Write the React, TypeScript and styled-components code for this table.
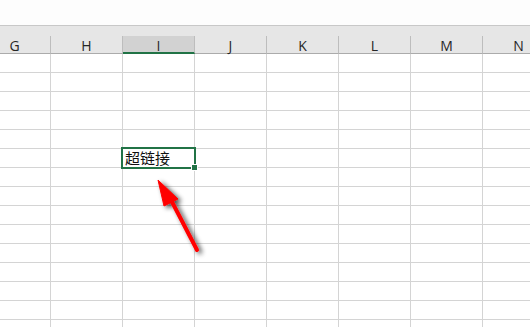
import React from 'react';
import styled, { createGlobalStyle } from 'styled-components';

const GlobalStyle = createGlobalStyle`
  html, body {
    margin: 0;
    padding: 0;
    background: #ffffff;
    overflow: hidden;
  }
`;

const COLUMNS = ['G', 'H', 'I', 'J', 'K', 'L', 'M', 'N'];
const ROW_COUNT = 15;
const ACTIVE_COL = 'I';
const ACTIVE_ROW = 5;

const Sheet = styled.div`
  position: relative;
  width: 530px;
  height: 327px;
  overflow: hidden;
  background: #ffffff;
  font-family: 'Open Sans', 'Liberation Sans', sans-serif;
`;

const FormulaGap = styled.div`
  height: 25px;
  background: #fdfdfd;
  border-bottom: 1px solid #c8c8c8;
`;

const HeaderBar = styled.div`
  display: flex;
  align-items: flex-end;
  height: 28px;
  margin-left: -21px;
  background: #e6e6e6;
`;

const ColHeader = styled.div<{ $active?: boolean }>`
  display: flex;
  align-items: center;
  justify-content: center;
  box-sizing: border-box;
  flex: 0 0 72px;
  height: 18px;
  padding-top: 3px;
  border-right: 1px solid #bdbdbd;
  border-bottom: ${(p) => (p.$active ? '2px solid #217346' : '1px solid #ababab')};
  background: ${(p) => (p.$active ? '#d2d2d2' : '#e6e6e6')};
  color: #262626;
  font-size: 14px;
  line-height: 1;
`;

const Body = styled.div`
  margin-left: -21px;
`;

const Row = styled.div`
  display: flex;
  height: 19px;
`;

const Cell = styled.div`
  position: relative;
  box-sizing: border-box;
  flex: 0 0 72px;
  height: 19px;
  border-right: 1px solid #d4d4d4;
  border-bottom: 1px solid #d4d4d4;
  padding: 0 2px;
  font-family: 'Noto Sans CJK SC', 'Noto Sans', sans-serif;
  font-size: 15px;
  line-height: 19px;
  color: #111111;
  white-space: nowrap;
`;

const CellText = styled.span`
  position: relative;
  z-index: 2;
  top: -1px;
`;

const Selection = styled.div`
  position: absolute;
  top: -2px;
  left: -2px;
  right: -2px;
  bottom: -2px;
  border: 2px solid #217346;
  z-index: 1;
`;

const FillHandle = styled.div`
  position: absolute;
  right: -4px;
  bottom: -4px;
  width: 5px;
  height: 5px;
  background: #217346;
  border: 1px solid #ffffff;
`;

const Pointer = styled.svg`
  position: absolute;
  left: 0;
  top: 0;
  pointer-events: none;
`;

const App: React.FC = () => {
  return (
    <Sheet>
      <GlobalStyle />
      <FormulaGap />
      <HeaderBar>
        {COLUMNS.map((c) => (
          <ColHeader key={c} $active={c === ACTIVE_COL}>
            {c}
          </ColHeader>
        ))}
      </HeaderBar>
      <Body>
        {Array.from({ length: ROW_COUNT }).map((_, r) => (
          <Row key={r}>
            {COLUMNS.map((c) => {
              const active = r === ACTIVE_ROW && c === ACTIVE_COL;
              return (
                <Cell key={c}>
                  {active && (
                    <>
                      <CellText>超链接</CellText>
                      <Selection>
                        <FillHandle />
                      </Selection>
                    </>
                  )}
                </Cell>
              );
            })}
          </Row>
        ))}
      </Body>
      <Pointer width="530" height="327" viewBox="0 0 530 327">
        <defs>
          <filter id="arrowShadow" x="-50%" y="-50%" width="200%" height="200%">
            <feGaussianBlur in="SourceAlpha" stdDeviation="2.5" />
            <feOffset dx="3" dy="2" result="blur" />
            <feComponentTransfer>
              <feFuncA type="linear" slope="0.7" />
            </feComponentTransfer>
            <feMerge>
              <feMergeNode />
              <feMergeNode in="SourceGraphic" />
            </feMerge>
          </filter>
        </defs>
        <g filter="url(#arrowShadow)" fill="#ff0000" stroke="#ff0000">
          <line x1="197" y1="250" x2="170" y2="198" strokeWidth="4" strokeLinecap="round" />
          <polygon points="158,180 178,199 164,206" strokeWidth="1" strokeLinejoin="round" />
        </g>
      </Pointer>
    </Sheet>
  );
};

export default App;
